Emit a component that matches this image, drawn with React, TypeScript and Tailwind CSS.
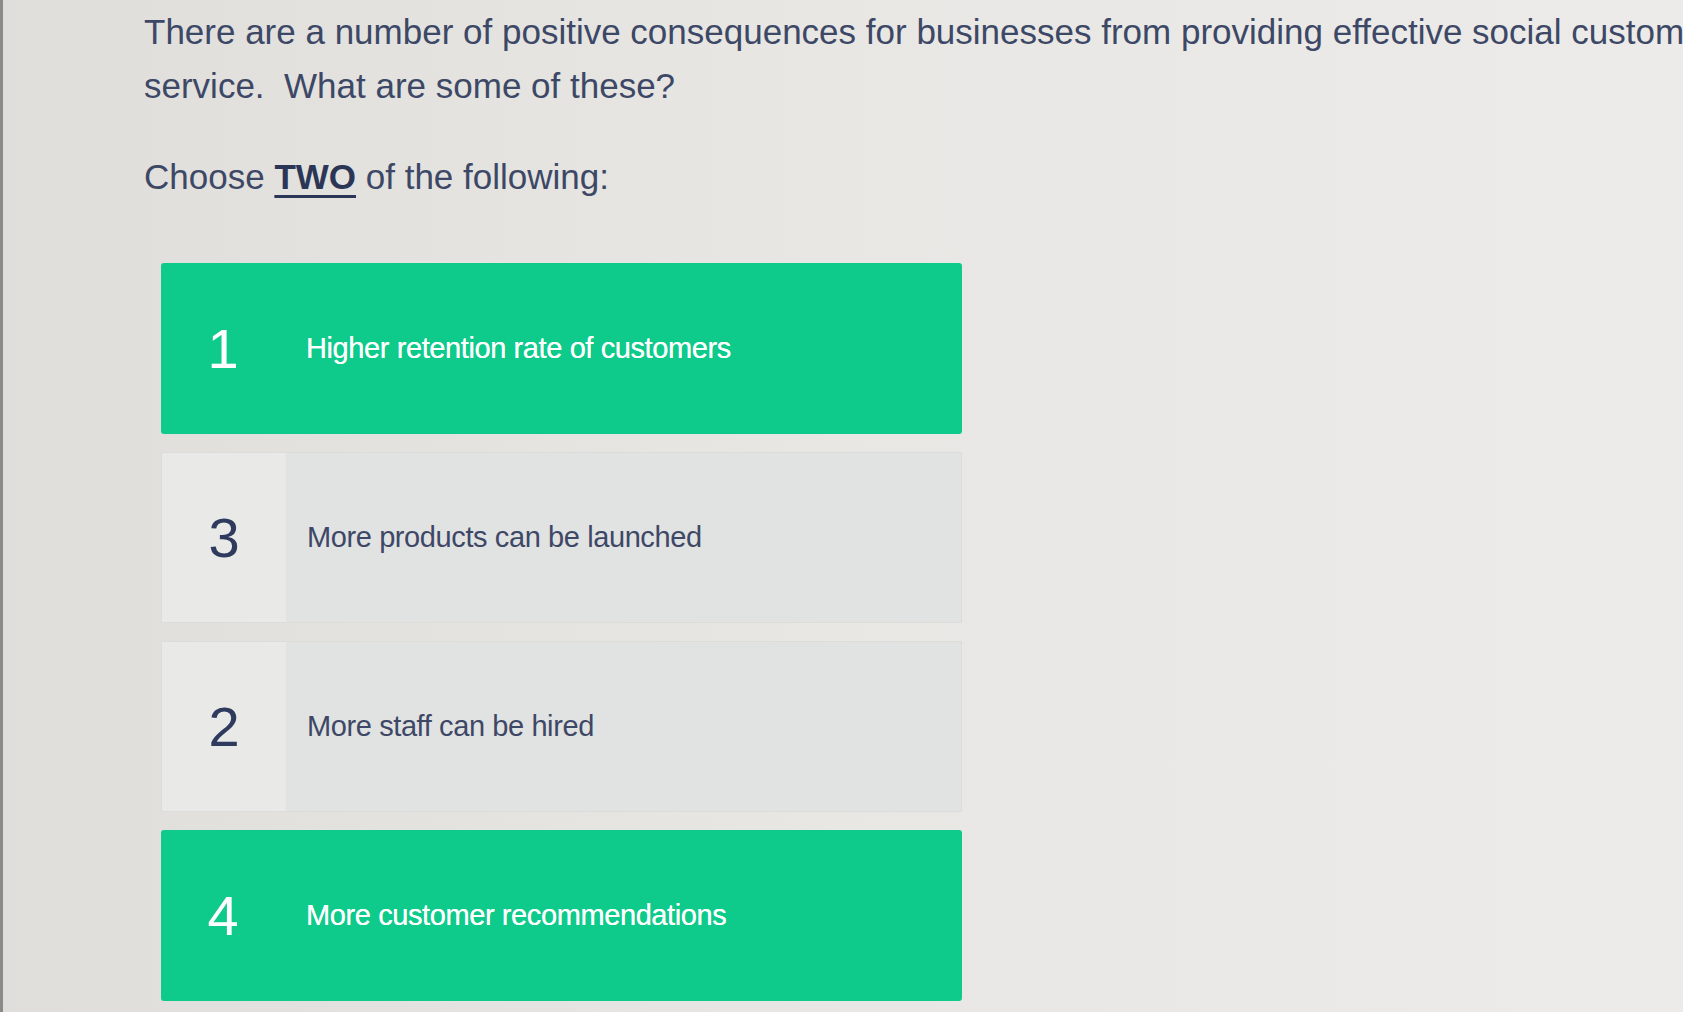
import React from 'react';

type Option = { num: number; label: string; selected: boolean };

const options: Option[] = [
  { num: 1, label: 'Higher retention rate of customers', selected: true },
  { num: 3, label: 'More products can be launched', selected: false },
  { num: 2, label: 'More staff can be hired', selected: false },
  { num: 4, label: 'More customer recommendations', selected: true },
];

function OptionCard({ opt }: { opt: Option }) {
  if (opt.selected) {
    return (
      <div className="flex h-[171px] w-[801px] items-center rounded-[3px] bg-[#0ecb8b]">
        <div className="flex w-[124px] justify-center text-[56px] font-light leading-none text-white">{opt.num}</div>
        <div className="pl-[21px] text-[29px] tracking-[-0.4px] text-white [text-shadow:0_0_0.6px_#fff]">{opt.label}</div>
      </div>
    );
  }
  return (
    <div className="flex h-[171px] w-[801px] border border-[#dcdcda] bg-[#e1e2e2]">
      <div className="flex w-[124px] items-center justify-center bg-[#e9e9e7] text-[56px] font-light leading-none text-[#2e3a5e]">
        {opt.num}
      </div>
      <div className="flex items-center pl-[21px] text-[29px] tracking-[-0.4px] text-[#3e4866]">{opt.label}</div>
    </div>
  );
}

export default function App() {
  return (
    <div
      className="h-screen w-full overflow-hidden border-l-[3px] border-[#8a8a88] bg-gradient-to-r from-[#dfdedb] via-[#e8e7e4] to-[#ecebe9]"
      style={{ fontFamily: '"Liberation Sans", Arial, sans-serif' }}
    >
      <div className="pl-[141px] pt-[5px]">
        <p className="w-[1800px] whitespace-nowrap text-[35px] leading-[54px] text-[#3d4866]">
          There are a number of positive consequences for businesses from providing effective social customer
          <br />
          service.{'\u00a0'} What are some of these?
        </p>
        <p className="mt-[37px] text-[35px] leading-[54px] text-[#3d4866]">
          Choose{' '}
          <span className="font-bold text-[#2b3656] underline decoration-[3px] underline-offset-[6px]">TWO</span> of the
          following:
        </p>
        <div className="mt-[59px] flex flex-col gap-[18px] pl-[17px]">
          {options.map((o) => (
            <OptionCard key={o.num} opt={o} />
          ))}
        </div>
      </div>
    </div>
  );
}
